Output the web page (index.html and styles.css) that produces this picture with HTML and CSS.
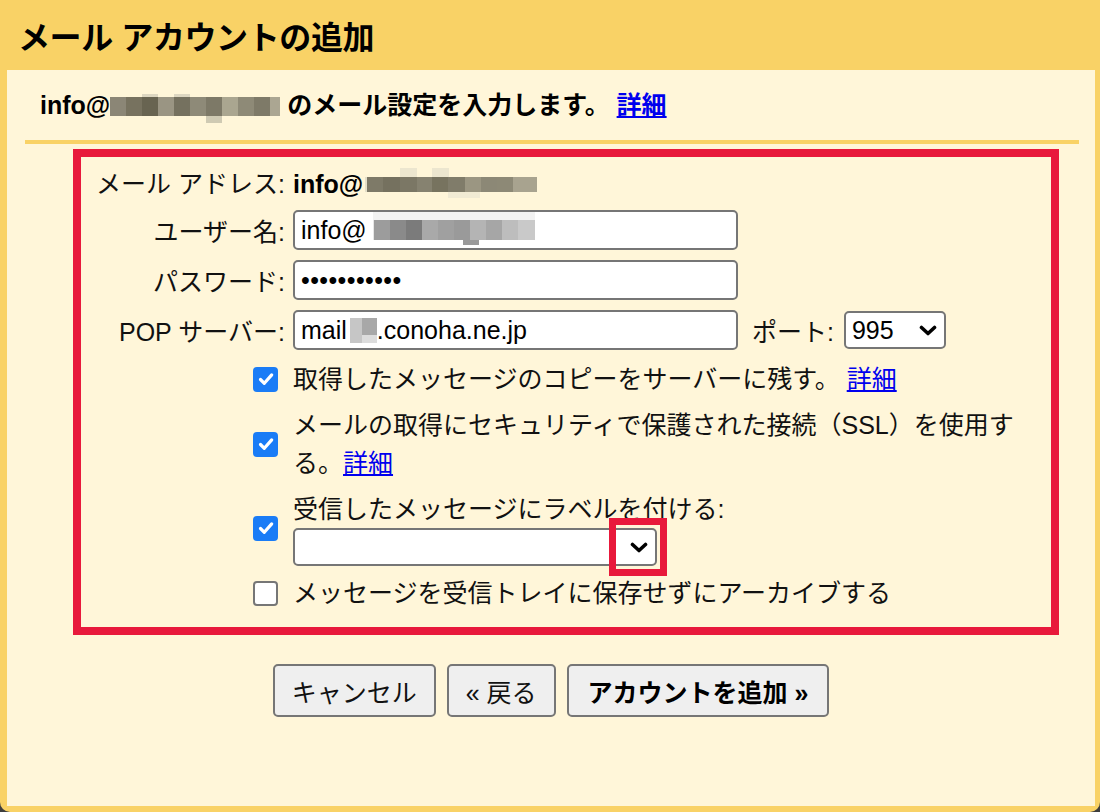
FILE: index.html
```html
<!DOCTYPE html>
<html lang="ja">
<head>
<meta charset="utf-8">
<title>メール アカウントの追加</title>
<link rel="stylesheet" href="styles.css">
</head>
<body>
<div class="window">
  <div class="titlebar"><h1 class="title">メール アカウントの追加</h1></div>
  <div class="panel">
    <p class="intro">info@<span class="blur blur-intro"></span> のメール設定を入力します。 <a href="#" class="link">詳細</a></p>
    <div class="divider"></div>
    <div class="highlight">
      <div class="form">
        <div class="row row-addr">
          <span class="label">メール アドレス:</span>
          <span class="addr-value">info@<span class="blur blur-addr"></span></span>
        </div>
        <div class="row row-field">
          <span class="label">ユーザー名:</span>
          <div class="field">info@<span class="blur blur-user"></span></div>
        </div>
        <div class="row row-field">
          <span class="label">パスワード:</span>
          <div class="field field-pass">•••••••••••</div>
        </div>
        <div class="row row-field">
          <span class="label">POP サーバー:</span>
          <div class="field">mail<span class="blur blur-pop"></span>.conoha.ne.jp</div>
          <span class="port-label">ポート:</span>
          <div class="select select-port">
            <span>995</span>
            <svg class="chevron" width="18" height="11" viewBox="0 0 18 11"><polyline points="2.5,2.5 9,8.5 15.5,2.5" fill="none" stroke="#000" stroke-width="3.6" stroke-linecap="round" stroke-linejoin="round"/></svg>
          </div>
        </div>
        <div class="row row-check row-first-check">
          <div class="check-cell"><span class="checkbox checked"><svg width="24" height="24" viewBox="0 0 24 24"><path d="M6.5 12.5l3.8 3.8 7.4-8.4" fill="none" stroke="#fff" stroke-width="3.2" stroke-linecap="round" stroke-linejoin="round"/></svg></span></div>
          <div class="check-text">取得したメッセージのコピーをサーバーに残す。 <a href="#" class="link">詳細</a></div>
        </div>
        <div class="row row-check">
          <div class="check-cell"><span class="checkbox checked"><svg width="24" height="24" viewBox="0 0 24 24"><path d="M6.5 12.5l3.8 3.8 7.4-8.4" fill="none" stroke="#fff" stroke-width="3.2" stroke-linecap="round" stroke-linejoin="round"/></svg></span></div>
          <div class="check-text">メールの取得にセキュリティで保護された接続（SSL）を使用する。<a href="#" class="link">詳細</a></div>
        </div>
        <div class="row row-check">
          <div class="check-cell"><span class="checkbox checked"><svg width="24" height="24" viewBox="0 0 24 24"><path d="M6.5 12.5l3.8 3.8 7.4-8.4" fill="none" stroke="#fff" stroke-width="3.2" stroke-linecap="round" stroke-linejoin="round"/></svg></span></div>
          <div class="check-text">
            <div>受信したメッセージにラベルを付ける:</div>
            <div class="select select-label">
              <span></span>
              <svg class="chevron" width="18" height="11" viewBox="0 0 18 11"><polyline points="2.5,2.5 9,8.5 15.5,2.5" fill="none" stroke="#000" stroke-width="3.6" stroke-linecap="round" stroke-linejoin="round"/></svg>
              <span class="mark"></span>
            </div>
          </div>
        </div>
        <div class="row row-check">
          <div class="check-cell"><span class="checkbox unchecked"></span></div>
          <div class="check-text">メッセージを受信トレイに保存せずにアーカイブする</div>
        </div>
      </div>
    </div>
    <div class="buttons">
      <button class="btn">キャンセル</button>
      <button class="btn">« 戻る</button>
      <button class="btn btn-primary">アカウントを追加 »</button>
    </div>
  </div>
</div>
</body>
</html>
```
FILE: styles.css
```css
* { box-sizing: border-box; }
html, body { margin: 0; padding: 0; }
body {
  width: 1100px;
  height: 812px;
  overflow: hidden;
  background: #3d3d3d;
  font-family: "Liberation Sans", "Noto Sans CJK JP", sans-serif;
  color: #111;
}
.window {
  width: 1100px;
  height: 812px;
  background: #f9d266;
  border-radius: 0 0 10px 10px;
  padding: 0 5px 6px 7px;
  display: flex;
  flex-direction: column;
}
.titlebar {
  height: 70px;
  flex: none;
  display: flex;
  align-items: center;
  padding: 6px 0 0 11px;
}
.title {
  margin: 0;
  font-size: 32px;
  line-height: 1;
  font-weight: bold;
  color: #000;
  letter-spacing: -0.4px;
}
.panel {
  flex: 1;
  background: #fff6d9;
  display: flex;
  flex-direction: column;
}
.intro {
  margin: 0;
  height: 70px;
  line-height: 70px;
  padding-left: 33px;
  font-size: 25px;
  font-weight: bold;
  color: #000;
  white-space: nowrap;
}
.link { color: #0000ee; text-decoration: underline; }
.divider {
  height: 4px;
  background: #f9d266;
  margin: 0 16px 0 18px;
  flex: none;
}
.highlight {
  margin: 5px 36px 0 66px;
  border: 8px solid #e8193b;
  flex: none;
}
.form {
  display: flex;
  flex-direction: column;
  padding: 9px 21px 15px 0;
  font-size: 25px;
}
.row { display: flex; align-items: center; }
.label {
  width: 204px;
  flex: none;
  text-align: right;
  margin-right: 8px;
  white-space: nowrap;
}
.row-addr { height: 36px; line-height: 36px; }
.addr-value { font-weight: bold; color: #000; display: flex; align-items: center; }
.row-field { margin-top: 10px; }
.row-addr + .row-field { margin-top: 8px; }
.field {
  width: 445px;
  height: 40px;
  flex: none;
  background: #fff;
  border: 2px solid #767676;
  border-radius: 5px;
  padding: 0 6px;
  display: flex;
  align-items: center;
  color: #000;
  white-space: nowrap;
}
.field-pass { letter-spacing: 0.4px; }
.port-label { margin-left: 14px; white-space: nowrap; }
.select {
  position: relative;
  height: 38px;
  background: #fff;
  border: 2px solid #767676;
  border-radius: 5px;
  display: flex;
  align-items: center;
  justify-content: space-between;
  color: #000;
}
.select-port { width: 102px; margin-left: 10px; padding: 0 7px 0 6px; }
.select-label { width: 364px; padding: 0 7px 0 6px; }
.chevron { display: block; flex: none; }
.mark {
  position: absolute;
  left: 314px;
  top: -12px;
  width: 58px;
  height: 58px;
  border: 7px solid #e8193b;
}
.row-check { margin-top: 8px; }
.row-first-check { margin-top: 10px; }
.check-cell {
  width: 204px;
  flex: none;
  display: flex;
  justify-content: flex-end;
  padding-right: 7px;
  margin-right: 8px;
}
.checkbox {
  width: 25px;
  height: 25px;
  border-radius: 4px;
  display: flex;
  align-items: center;
  justify-content: center;
}
.checked { background: #1a7cf6; }
.unchecked { background: #fff; border: 2px solid #767676; }
.check-text { flex: 1; line-height: 38px; }
.blur {
  display: inline-block;
  position: relative;
  flex: none;
}
.blur-intro {
  width: 170px;
  height: 19px;
  vertical-align: -2px;
  background: linear-gradient(to right,
    #8b8676 0 16px, #77725f 16px 32px, #686451 32px 48px, #9a9583 48px 64px,
    #75715f 64px 80px, #8e8a78 80px 96px, #7d7967 96px 112px, #aaa690 112px 128px,
    #8e8a77 128px 144px, #7e7a68 144px 160px, #aba692 160px 170px);
}
.blur-intro::after {
  content: "";
  position: absolute;
  left: 96px;
  top: 19px;
  width: 16px;
  height: 7px;
  background: #cfcab3;
}
.blur-intro::before {
  content: "";
  position: absolute;
  left: 32px;
  top: -3px;
  width: 16px;
  height: 3px;
  background: #ddd7c1;
  box-shadow: 32px 0 0 #ddd7c1;
}
.blur-addr {
  width: 172px;
  height: 15px;
  margin-left: 2px;
  background: linear-gradient(to right,
    #e4dfc9 0 2px, #7e7a68 2px 18px, #75715f 18px 35px, #7b7765 35px 52px, #868270 52px 67px,
    #77735f 67px 83px, #807c6a 83px 100px, #9b9682 100px 116px, #8c8876 116px 132px,
    #8d8976 132px 148px, #a8a38f 148px 172px);
}
.blur-addr::before {
  content: "";
  position: absolute;
  left: 35px;
  top: -9px;
  width: 17px;
  height: 9px;
  background: #ece6cf;
  box-shadow: 32px 0 0 #ece6cf;
}
.blur-addr::after {
  content: "";
  position: absolute;
  left: 83px;
  top: 15px;
  width: 32px;
  height: 6px;
  background: #f1ebd4;
}
.blur-user {
  width: 162px;
  height: 20px;
  margin-left: 6px;
  background: linear-gradient(to right,
    #e6e6e6 0 1px, #9c9c9c 1px 17px, #8a8a8a 17px 33px, #7b7b7b 33px 49px, #a9a9a9 49px 65px,
    #a0a0a0 65px 81px, #9a9a9a 81px 97px, #b4b4b4 97px 113px, #a6a6a6 113px 129px,
    #bdbdbd 129px 145px, #c9c9c9 145px 162px);
}
.blur-user::before {
  content: "";
  position: absolute;
  left: 0;
  top: -8px;
  width: 162px;
  height: 8px;
  background: #f2f2f2;
}
.blur-user::after {
  content: "";
  position: absolute;
  left: 90px;
  top: 20px;
  width: 16px;
  height: 5px;
  background: #9a9a9a;
}
.blur-pop {
  width: 27px;
  height: 25px;
  margin-left: 3px;
  background: linear-gradient(to right, #c6c6c6 0 12px, #a8a8a8 12px 27px);
}
.blur-pop::after {
  content: "";
  position: absolute;
  left: 12px;
  top: 17px;
  width: 15px;
  height: 8px;
  background: #dcdcdc;
}
.buttons {
  margin-top: 29px;
  display: flex;
  justify-content: center;
  gap: 11px;
}
.btn {
  height: 53px;
  padding: 0 17px;
  font-family: "Liberation Sans", "Noto Sans CJK JP", sans-serif;
  font-size: 25px;
  color: #111;
  background: #efefef;
  border: 2px solid #767676;
  border-radius: 5px;
  white-space: nowrap;
}
.btn-primary { font-weight: bold; color: #000; padding: 0 19px; }
```
